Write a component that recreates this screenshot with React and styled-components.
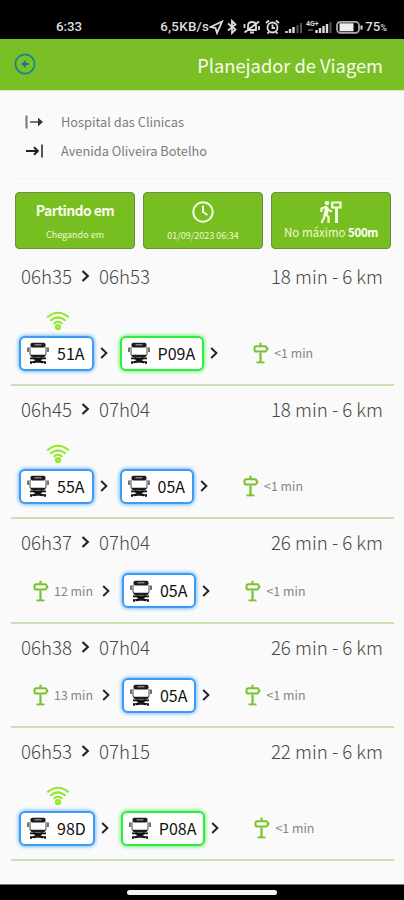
import { Fragment } from "react";
import styled, { createGlobalStyle } from "styled-components";

const GlobalStyle = createGlobalStyle`
   * {
      box-sizing: border-box;
   }

   body {
      margin: 0;
      background-color: #fafafa;
      font-family: "Noto Sans CJK SC", "Noto Sans", sans-serif;
   }
`

const Screen = styled.div`
   width: 404px;
   height: 900px;
   display: flex;
   flex-direction: column;
   overflow: hidden;
   background-color: #fafafa;
`

const StatusBar = styled.div`
   height: 39px;
   flex: none;
   display: flex;
   align-items: center;
   padding: 15px 17px 0 56px;
   background-color: #000;
   color: #dedede;
   font-family: Roboto, sans-serif;
   font-size: 13.3px;
   font-weight: 500;
   line-height: 16px;
   white-space: nowrap;
`

const Speed = styled.span`
   margin-left: auto;
   letter-spacing: 0.3px;
`

const StatusIcons = styled.svg`
   display: block;
   width: 155px;
   height: 16px;
   flex: none;
`

const Battery = styled.span`
   display: flex;
   align-items: baseline;
   margin-left: 1px;

   small {
      font-size: 9px;
      line-height: 10px;
   }
`

const Header = styled.header`
   height: 52px;
   flex: none;
   display: flex;
   align-items: center;
   justify-content: space-between;
   padding: 0 21px 0 14px;
   background-color: #7abf26;
   border-bottom: 1px solid #dcecc4;

   svg {
      display: block;
      margin-top: -2px;
   }
`

const Title = styled.h1`
   margin: 1px 0 0;
   color: #f7fbe9;
   font-size: 18.3px;
   font-weight: 400;
   line-height: 24px;
   white-space: nowrap;
`

const Places = styled.div`
   height: 88px;
   flex: none;
   margin: 0 12px;
   padding: 16px 0 0 12px;
   border-bottom: 1px solid #f2f2f2;
`

const Place = styled.div`
   height: 29px;
   display: flex;
   align-items: center;
   gap: 16px;
   color: #7c7c7c;
   font-size: 12.8px;
   line-height: 20px;

   svg {
      display: block;
      flex: none;
   }
`

const Options = styled.div`
   flex: none;
   display: flex;
   gap: 8px;
   padding: 13px 13px 0 15px;
`

const Option = styled.div`
   width: 120px;
   height: 57px;
   display: flex;
   flex-direction: column;
   align-items: center;
   padding-top: 7px;
   border: 1px solid #6d8c45;
   border-radius: 4px;
   background-color: #77bf20;
   color: #f8fce9;
   white-space: nowrap;

   svg {
      display: block;
      flex: none;
   }
`

const OptionTitle = styled.strong`
   font-size: 14px;
   font-weight: 700;
   line-height: 20px;
   letter-spacing: -0.6px;
`

const OptionText = styled.span`
   margin-top: ${({ $top }) => $top || "0"};
   font-size: ${({ $size }) => $size};
   line-height: 14px;
   color: #eef8d6;

   b {
      color: #fff;
      letter-spacing: -0.4px;
   }
`

const Trips = styled.main`
   flex: 1;
   margin: 4px 10px 0 11px;
`

const Trip = styled.section`
   height: ${({ $live }) => ($live ? "133px" : "104.5px")};
   display: flex;
   flex-direction: column;
   justify-content: space-between;
   padding: 11px 11px 13px 10px;
   border-bottom: 2px solid #c9e1b0;
`

const Summary = styled.div`
   height: 24px;
   display: flex;
   align-items: center;
   color: #484848;
   font-size: 18.7px;
   font-weight: 300;
   line-height: 24px;

   svg {
      margin: 0 9px 0 9px;
   }
`

const Duration = styled.span`
   margin-left: auto;
`

const Legs = styled.div`
   display: flex;
   align-items: center;
   height: 36px;
   padding-left: ${({ $indent }) => $indent};
   margin-left: -3px;
`

const Ride = styled.div`
   position: relative;
   height: 35px;
   display: flex;
   align-items: center;
   gap: 8px;
   padding: 0 7px 0 6px;
   border: 2px solid ${({ $color }) => $color};
   border-radius: 6px;
   background-color: #fff;
   box-shadow: 0 0 4px ${({ $color }) => $color};
   color: #111;
   font-size: 16px;
   line-height: 22px;
   white-space: nowrap;

   svg {
      flex: none;
   }

   span {
      margin-top: -1px;
   }
`

const Live = styled.svg`
   position: absolute;
   left: 25px;
   top: -27px;
`

const Walk = styled.div`
   display: flex;
   align-items: center;
   gap: 5px;
   margin-left: ${({ $final }) => ($final ? "34px" : "0")};
   color: #858585;
   font-size: 12.4px;
   line-height: 18px;
   white-space: nowrap;
`

const BottomBar = styled.div`
   height: 16px;
   flex: none;
   display: flex;
   justify-content: center;
   align-items: center;
   background-color: #000;
   border-top: 1px solid #777;

   &::after {
      content: "";
      width: 150px;
      height: 5px;
      border-radius: 3px;
      background-color: #f4f4f4;
   }
`

const Chevron = styled.svg`
   display: block;
   flex: none;
`

const Next = styled(Chevron)`
   margin: 0 ${({ $right }) => $right || "0"} 0 ${({ $left }) => $left || "5px"};
`

const ArrowFrom = () => (
   <svg width="21" height="16" viewBox="0 0 21 16" fill="none">
      <path d="M2.5 1.5v13" stroke="#777" strokeWidth="2" />
      <path d="M6 8h9" stroke="#777" strokeWidth="2" />
      <path d="M14 3.8 19 8l-5 4.2z" fill="#333" />
   </svg>
)

const ArrowTo = () => (
   <svg width="21" height="16" viewBox="0 0 21 16" fill="none">
      <path d="M2 8h11.5M10 4.2 13.8 8 10 11.8" stroke="#222" strokeWidth="2" />
      <path d="M18 1.5v13" stroke="#555" strokeWidth="2" />
   </svg>
)

const Bus = () => (
   <svg width="22" height="22" viewBox="0 0 22 22" fill="none">
      <rect x="3.5" y="0.8" width="15" height="4.7" rx="1.8" fill="#1c1c1c" />
      <path d="M7.5 2.8h7" stroke="#999" strokeWidth="1.2" />
      <path d="M3 5v7q0 1.800 1.800 1.800h12.400Q19 13.800 19 12V5" stroke="#444" strokeWidth="1" />
      <path d="M1 5.500v4.500M21 5.500v4.500" stroke="#444" strokeWidth="1.500" />
      <path d="M3.800 12.700h14.400v1.500l-1.200 1H5l-1.200-1z" fill="#1c1c1c" />
      <path d="M3 16.300h16M3 20h16" stroke="#111" strokeWidth="1.700" />
      <path d="m6.500 16 9.500 4.500M15.500 16 6 20.500" stroke="#111" strokeWidth="2" />
      <path d="M4 20v1.800M18 20v1.800" stroke="#111" strokeWidth="2" />
   </svg>
)

const Sign = () => (
   <svg width="16" height="22" viewBox="0 0 16 22" fill="none" stroke="#78c22b">
      <path d="M7.5 0.8v3M7.5 10.500V20" strokeWidth="2.200" />
      <path d="M3.500 4.200h9l2 2.700-2 2.700h-9Q1.500 9.600 1.500 7.800V6Q1.500 4.200 3.500 4.200z" strokeWidth="2" strokeLinejoin="round" />
      <path d="M3.500 20.400h8" strokeWidth="1.800" />
   </svg>
)

const Wifi = () => (
   <Live width="24" height="20" viewBox="0 0 24 20" fill="none" stroke="#8eea28" strokeWidth="2">
      <path d="M1.200 6.200Q12-2.800 22.800 6.200M4.300 9.700Q12 3 19.700 9.700M7.600 12.900Q12 8.600 16.400 12.900" />
      <circle cx="12" cy="16" r="2.100" fill="#b9f07a" />
   </Live>
)

const Small = (props) => (
   <Next width="10" height="14" viewBox="0 0 10 14" fill="none" {...props}>
      <path d="M2.200 2 7.400 7 2.200 12" stroke="#222" strokeWidth="1.900" />
   </Next>
)

const blue = "#3b9bf5"
const green = "#31ec3f"

const trips = [
   { start: "06h35", end: "06h53", total: "18 min - 6 km", live: true, rides: [["51A", blue], ["P09A", green]] },
   { start: "06h45", end: "07h04", total: "18 min - 6 km", live: true, rides: [["55A", blue], ["05A", blue]] },
   { start: "06h37", end: "07h04", total: "26 min - 6 km", walk: "12 min", rides: [["05A", blue]] },
   { start: "06h38", end: "07h04", total: "26 min - 6 km", walk: "13 min", rides: [["05A", blue]] },
   { start: "06h53", end: "07h15", total: "22 min - 6 km", live: true, rides: [["98D", blue], ["P08A", green]] },
]

export default function App() {
   return (
      <Screen>
         <GlobalStyle />
         <StatusBar>
            <span>6:33</span>
            <Speed>6,5KB/s</Speed>
            <StatusIcons viewBox="0 0 155 16" fill="none" stroke="#ddd" strokeWidth="1.8">
               <path d="M1.5 8 13 2.5 8 14 6.5 9z" />
               <path d="m19 4.5 7.5 6-3.5 3.5V2l3.5 3.5-7.500 6" />
               <path d="M39 11V7q0-4 4-4t4 4v4zM41 13.500h4M35.500 13.500 50 2.500M35.500 5v4M50 7v4" />
               <circle cx="63.500" cy="8.500" r="5" />
               <path d="M63.500 5.500V9H66M57 4l3-2.500M70 4l-3-2.500M60 13l-1.500 1.500M67 13l1.500 1.500" />
               <path d="M77.500 14v-2M81 14v-4M84.500 14V8" strokeWidth="2.400" />
               <path d="M88.500 14V6M92 14V4" stroke="#555" strokeWidth="2" />
               <text x="97" y="7" fill="#ddd" stroke="none" fontSize="7" fontWeight="700">4G+</text>
               <path d="M99 11h5" stroke="#555" />
               <path d="M107.500 14v-3M111 14v-5M114.500 14V7M118 14V5" strokeWidth="2.400" />
               <path d="M121.500 14V3" stroke="#555" strokeWidth="2" />
               <rect x="128" y="2.800" width="22" height="11" rx="3.500" stroke="#aaa" />
               <path d="M130.500 8.300h14" stroke="#eee" strokeWidth="8" />
               <path d="M152.500 6.500v4" strokeWidth="2" />
            </StatusIcons>
            <Battery>75<small>%</small></Battery>
         </StatusBar>
         <Header>
            <svg width="22" height="22" viewBox="0 0 22 22" fill="none">
               <circle cx="11" cy="11" r="9.600" stroke="#16859a" strokeWidth="1.800" />
               <path d="m7 11 5-4v8z" fill="#127a9c" />
               <path d="M11 11h4" stroke="#127a9c" strokeWidth="2" />
            </svg>
            <Title>Planejador de Viagem</Title>
         </Header>
         <Places>
            <Place><ArrowFrom />Hospital das Clinicas</Place>
            <Place><ArrowTo />Avenida Oliveira Botelho</Place>
         </Places>
         <Options>
            <Option>
               <OptionTitle>Partindo em</OptionTitle>
               <OptionText $size="9px" $top="8px">Chegando em</OptionText>
            </Option>
            <Option>
               <svg width="24" height="24" viewBox="0 0 24 24" fill="none" stroke="#f4fbe4" strokeWidth="2">
                  <circle cx="12" cy="12" r="9.700" />
                  <path d="M12 5.500V12l4.500 3" />
               </svg>
               <OptionText $size="9px" $top="5px">01/09/2023 06:34</OptionText>
            </Option>
            <Option>
               <svg width="24" height="24" viewBox="0 0 24 24" fill="none" stroke="#f4fbe4" strokeWidth="2.200">
                  <circle cx="8" cy="3" r="2.300" fill="#f4fbe4" stroke="none" />
                  <path d="M2.500 12V8.500L7 6.800l2.500 3.400 3.500 1.300M7.500 7.500 6 13.500l3.500 3.500V23M6 13 5 18l-2.500 5" />
                  <path d="M7.500 7v7" strokeWidth="3.500" />
                  <path d="M13.200 2.500h8.300v5h-8.300z" />
                  <path d="M17.500 7v16" strokeWidth="3" />
               </svg>
               <OptionText $size="11.5px" $top="1px">No máximo <b>500m</b></OptionText>
            </Option>
         </Options>
         <Trips>
            {trips.map((trip) => (
               <Trip key={trip.start} $live={trip.live}>
                  <Summary>
                     {trip.start}
                     <Chevron width="9" height="14" viewBox="0 0 9 14" fill="none">
                        <path d="M1.500 2 6.800 7 1.500 12" stroke="#222" strokeWidth="2.200" />
                     </Chevron>
                     {trip.end}
                     <Duration>{trip.total}</Duration>
                  </Summary>
                  <Legs $indent={trip.walk ? "15px" : "1px"}>
                     {trip.walk && (
                        <>
                           <Walk><Sign />{trip.walk}</Walk>
                           <Small $left="8px" $right="11px" />
                        </>
                     )}
                     {trip.rides.map(([line, color], i) => (
                        <Fragment key={line}>
                           <Ride $color={color}>
                              {trip.live && i === 0 && <Wifi />}
                              <Bus />
                              <span>{line}</span>
                           </Ride>
                           <Small $right={trip.live && i === 0 ? "11px" : "0"} />
                        </Fragment>
                     ))}
                     <Walk $final><Sign />&lt;1 min</Walk>
                  </Legs>
               </Trip>
            ))}
         </Trips>
         <BottomBar />
      </Screen>
   )
}
